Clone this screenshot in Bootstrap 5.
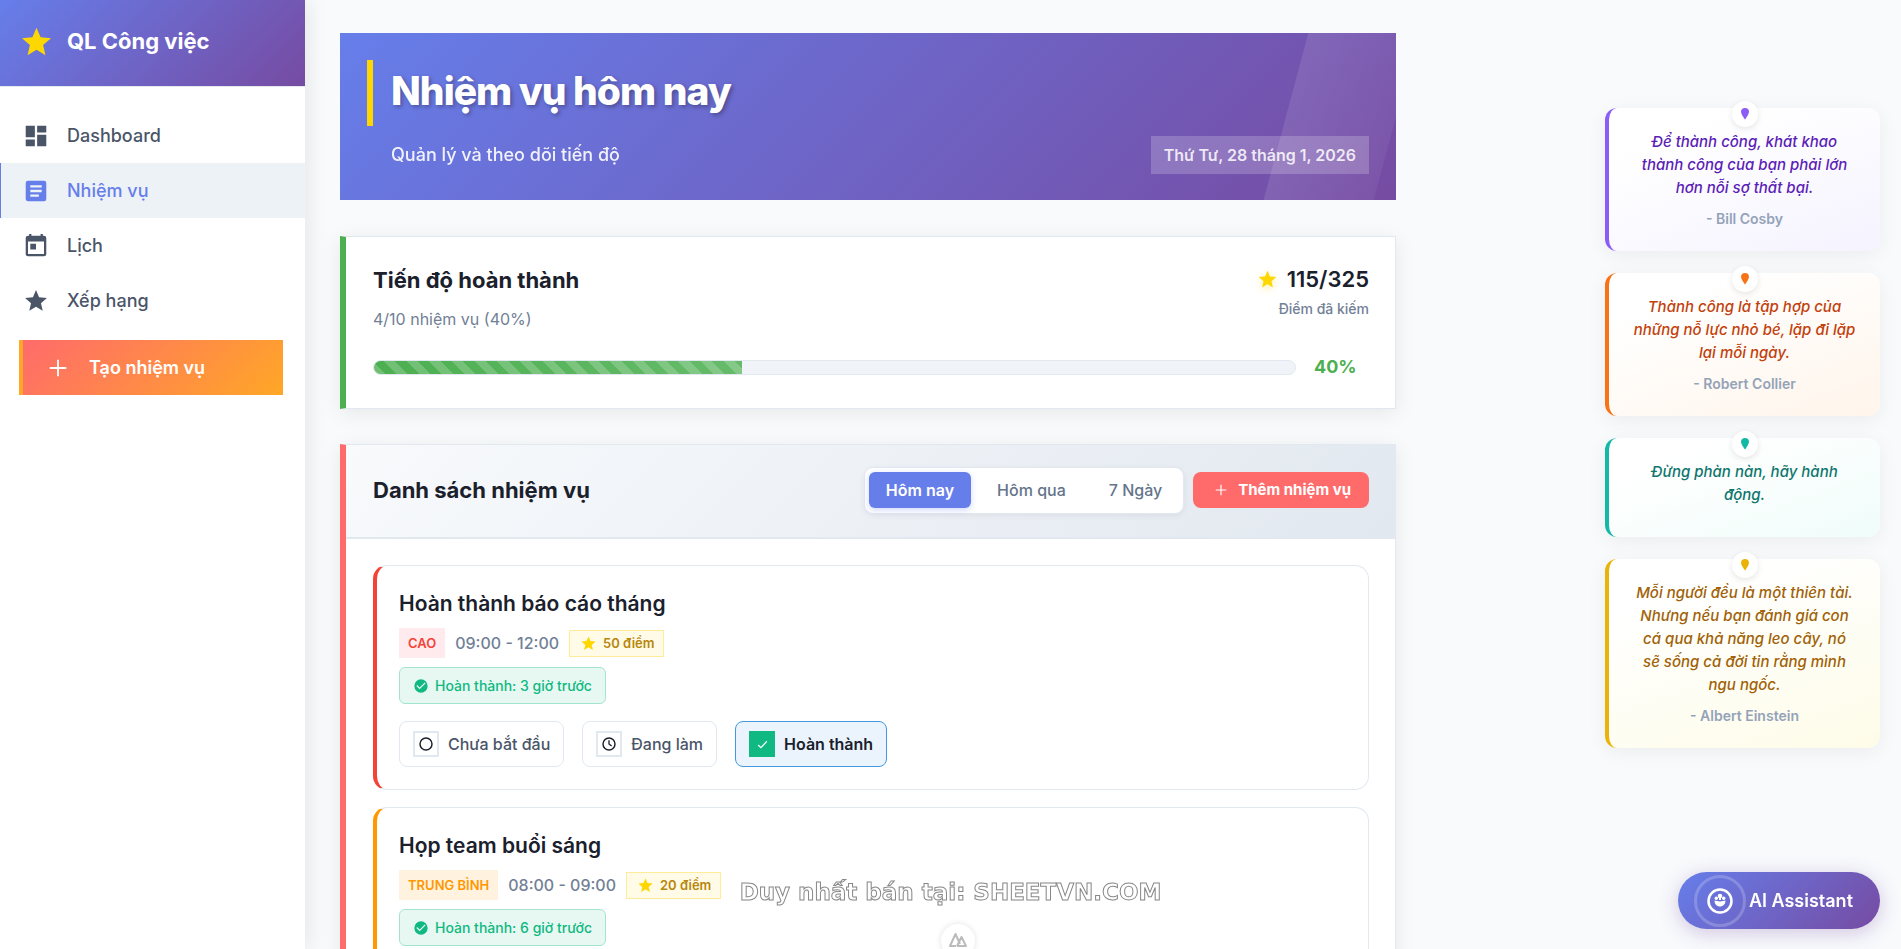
<!DOCTYPE html>
<html lang="vi">
<head>
<meta charset="utf-8">
<meta name="viewport" content="width=device-width, initial-scale=1">
<title>QL Công việc</title>
<link href="https://cdn.jsdelivr.net/npm/bootstrap@5.3.0/dist/css/bootstrap.min.css" rel="stylesheet">
<style>
  body { font-family: Inter, "Noto Sans", sans-serif; background: #f8fafc; color: #1a202c; font-size: 16px; line-height: 24px; }
  svg { display: block; flex: none; }
  .gold { color: #ffd700; }

  /* Sidebar */
  .side { width: 305px; background: #fff; box-shadow: 4px 0 20px rgba(0,0,0,.08); z-index: 2; }
  .brand { height: 87px; padding: 0 22px 4px; gap: 16px; background: linear-gradient(135deg, #667eea, #764ba2); border-bottom: 1px solid #e2e8f0; color: #fff; font-size: 22px; font-weight: 700; }
  .side-nav { padding-top: 21px; }
  .side-link { height: 55px; padding-left: 23px; gap: 19px; color: #4a5568; font-size: 18px; font-weight: 500; text-decoration: none; border-left: 1px solid transparent; }
  .side-link.active { color: #667eea; background: #edf2f7; border-left-color: #667eea; }
  .btn-create { height: 55px; margin: 12px 22px 0 19px; padding: 0 0 0 24px; gap: 20px; border: 0; border-left: 4px solid #ffa726; background: linear-gradient(135deg, #ff6b6b, #ffa726); color: #fff; font-size: 18px; font-weight: 600; }

  /* Page */
  .page { height: 100vh; overflow-y: auto; scrollbar-width: none; }
  .page::-webkit-scrollbar { display: none; }
  .content { padding: 33px 0 33px 35px; gap: 35px; min-width: 0; }
  .hero { height: 167px; margin-bottom: 1px; padding: 27px; background: linear-gradient(135deg, #667eea, #764ba2); color: #fff; overflow: hidden; position: relative; }
  .hero::after { content: ""; position: absolute; top: 0; right: 0; width: 110px; height: 100%; background: linear-gradient(90deg, rgba(255,255,255,.1), rgba(255,255,255,.05)); transform: skewX(-15deg); }
  .hero h1 { height: 66px; margin: 0 0 10px; padding-left: 18px; border-left: 6px solid #ffd700; font-size: 39px; font-weight: 800; line-height: 62px; letter-spacing: -1px; text-shadow: 2px 2px 4px rgba(0,0,0,.3); }
  .hero-sub { padding-left: 24px; font-size: 18px; font-weight: 500; opacity: .9; }
  .hero-date { height: 38px; padding: 0 13px; background: rgba(255,255,255,.2); color: rgba(255,255,255,.85); font-size: 16px; font-weight: 600; line-height: 38px; }

  .panel { background: #fff; border: 1px solid #e2e8f0; border-left-width: 6px; box-shadow: 0 4px 20px rgba(0,0,0,.08); }
  .panel-green { height: 173px; padding: 26px 26px 26px 27px; border-left-color: #4caf50; }
  .panel-red { border-left-color: #ff6b6b; }
  .panel h2 { margin: 0; font-size: 22px; font-weight: 700; line-height: 34px; }
  .muted { color: #718096; }
  .panel-note { margin-top: 10px; }
  .earned { font-size: 22px; font-weight: 600; line-height: 32px; gap: 9px; }
  .earned-label { font-size: 14px; font-weight: 500; line-height: 27px; }
  .star-glow { filter: drop-shadow(0 2px 4px rgba(255,215,0,.4)); }
  .meter-row { margin-top: 24px; gap: 18px; }
  .meter { height: 15px; background: #f0f4f8; border: 1px solid #e2e8f0; border-radius: 8px; }
  .meter .progress-bar { background: repeating-linear-gradient(45deg, rgba(255,255,255,.2) 0 8px, transparent 8px 16px), linear-gradient(90deg, #4caf50, #66bb6a); }
  .meter-value { width: 55px; color: #4caf50; font-size: 18px; font-weight: 700; }

  .panel-head { height: 94px; padding: 0 26px 2px 27px; background: linear-gradient(135deg, #f8fafc, #e2e8f0); border-bottom: 2px solid #e2e8f0; }
  .tools { gap: 9px; }
  .tabs { height: 47px; padding: 0 4px; gap: 9px; background: #fff; border: 1px solid #e2e8f0; border-radius: 9px; box-shadow: 0 2px 6px rgba(0,0,0,.06); }
  .tabs button { height: 36px; padding: 0 17px; border: 0; border-radius: 6px; color: #64748b; background: none; font-size: 16px; font-weight: 500; }
  .tabs button.active { background: #667eea; color: #fff; font-weight: 600; box-shadow: 0 2px 6px rgba(102,126,234,.3); }
  .btn-add { height: 36px; padding: 0 18px 0 21px; gap: 10px; border: 0; border-radius: 8px; background: #ff6b6b; color: #fff; font-size: 15px; font-weight: 700; }

  /* Task cards */
  .task-list { padding: 26px 26px 26px 27px; gap: 17px; }
  .task { padding: 22px; border: 1px solid #e2e8f0; border-left: 4px solid #f44336; border-radius: 14px; }
  .task-mid { border-left-color: #ff9800; }
  .task h3 { margin: 0 0 9px; font-size: 21px; font-weight: 600; line-height: 31px; }
  .meta { gap: 10px; margin-bottom: 9px; height: 30px; }
  .prio { height: 30px; padding: 0 9px; background: #ffebee; color: #f44336; font-size: 13px; font-weight: 600; line-height: 30px; }
  .prio-mid { background: #fff3e0; color: #ff9800; }
  .task-time { font-weight: 500; }
  .pts { height: 27px; padding: 0 9px 0 10px; gap: 6px; background: #fffbe6; border: 1px solid #ffec99; color: #b8860b; font-size: 13px; font-weight: 600; }
  .done { height: 37px; padding: 0 13px; gap: 6px; background: #e7f8f2; border: 1px solid #a3e4cf; border-radius: 6px; color: #10b981; font-size: 14px; font-weight: 500; }
  .states { gap: 18px; margin-top: 17px; }
  .state { height: 46px; padding: 0 13px; gap: 9px; background: #fff; border: 1px solid #e2e8f0; border-radius: 8px; color: #4a5568; font-size: 16px; font-weight: 500; }
  .state.active { background: #ebf4fd; border-color: #4299e1; color: #1a202c; font-weight: 600; }
  .state-box { width: 26px; height: 26px; border: 2px solid #e2e8f0; color: #1a202c; background: #fff; }
  .state.active .state-box { background: #10b981; border-color: #10b981; color: #fff; }

  /* Quotes */
  .quotes { width: 505px; padding: 108px 21px 0 0; gap: 22px; }
  .quote { --tone: #8b5cf6; width: 275px; padding: 22px; border-left: 4px solid var(--tone); border-radius: 12px; box-shadow: 0 4px 20px rgba(0,0,0,.06); position: relative; text-align: center; }
  .quote p { margin: 0 0 9px; font-size: 15px; font-style: italic; font-weight: 500; line-height: 23px; }
  .quote cite { display: block; color: #94a3b8; font-size: 14px; font-style: normal; font-weight: 600; line-height: 21px; }
  .quote .pin { position: absolute; top: -7px; left: 50%; width: 26px; height: 26px; margin-left: -13px; border-radius: 50%; background: #fff; color: var(--tone); box-shadow: 0 2px 6px rgba(0,0,0,.1); }
  .q-violet { background: linear-gradient(160deg, #fff 20%, #f5f3ff); color: #5b21b6; }
  .q-orange { --tone: #f97316; background: linear-gradient(160deg, #fff 20%, #fff5eb); color: #c2410c; }
  .q-teal { --tone: #14b8a6; background: linear-gradient(160deg, #fff 20%, #f0fdfa); color: #0f766e; }
  .q-gold { --tone: #eab308; background: linear-gradient(160deg, #fff 20%, #fefce8); color: #a16207; }

  /* Overlays */
  .assistant { position: fixed; right: 21px; bottom: 20px; height: 57px; padding: 0 27px 0 16px; gap: 3px; border: 0; border-radius: 29px; background: linear-gradient(135deg, #667eea, #764ba2); box-shadow: 0 4px 20px rgba(118,75,162,.3); color: #fff; font-size: 18px; font-weight: 600; z-index: 3; }
  .ring { width: 52px; height: 52px; border: 3px solid rgba(255,255,255,.2); border-radius: 50%; }
  .notice { position: fixed; left: 0; right: 0; bottom: 39px; z-index: 3; text-align: center; font: bold 23px/36px "DejaVu Sans", sans-serif; color: #fff; -webkit-text-stroke: 1px #888; pointer-events: none; }
  .dock { position: fixed; left: 50%; bottom: -9px; width: 34px; height: 34px; margin-left: -10px; border: 0; border-radius: 50%; background: #fff; box-shadow: 0 0 6px rgba(0,0,0,.12); color: #bbb; z-index: 3; }
</style>
</head>
<body>
<svg class="d-none" aria-hidden="true">
  <symbol id="star" viewBox="0 0 24 24"><path fill="currentColor" d="M12 17.27 18.18 21l-1.64-7.03L22 9.24l-7.19-.61L12 2 9.19 8.63 2 9.24l5.46 4.73L5.82 21z"/></symbol>
  <symbol id="plus" viewBox="0 0 24 24"><path fill="currentColor" d="M11 3h2v8h8v2h-8v8h-2v-8H3v-2h8z"/></symbol>
  <symbol id="check-circle" viewBox="0 0 24 24"><path fill="currentColor" d="M12 2a10 10 0 1 0 0 20 10 10 0 0 0 0-20zm-2 15-5-5 1.4-1.4 3.6 3.6 7.6-7.6L19 8z"/></symbol>
  <symbol id="circle" viewBox="0 0 24 24"><circle cx="12" cy="12" r="9" fill="none" stroke="currentColor" stroke-width="2.2"/></symbol>
  <symbol id="clock" viewBox="0 0 24 24"><circle cx="12" cy="12" r="9" fill="none" stroke="currentColor" stroke-width="2.2"/><path d="M12 6.500V12l4 3" fill="none" stroke="currentColor" stroke-width="2"/></symbol>
  <symbol id="check" viewBox="0 0 24 24"><path d="m4 13 5 5L20 6" fill="none" stroke="currentColor" stroke-width="2.200"/></symbol>
  <symbol id="drop" viewBox="0 0 10 14"><path fill="currentColor" d="M5 1C2.500 1 1 2.700 1 4.800 1 7.500 5 12.500 5 12.500S9 7.500 9 4.800C9 2.700 7.500 1 5 1z"/></symbol>
</svg>

<div class="d-flex vh-100">
  <aside class="side flex-shrink-0 vh-100 position-relative">
    <div class="brand d-flex align-items-center">
      <svg class="gold" width="29" height="29" viewBox="2 1.500 20 20"><use href="#star" width="24" height="24"/></svg>
      <span>QL Công việc</span>
    </div>
    <nav class="side-nav d-flex flex-column">
      <a href="#" class="side-link d-flex align-items-center"><svg width="24" height="24" viewBox="1.500 1.500 21 21"><path fill="currentColor" d="M3 13h8V3H3zm0 8h8v-6H3zm10 0h8V11h-8zm0-18v6h8V3z"/></svg>Dashboard</a>
      <a href="#" class="side-link active d-flex align-items-center" aria-current="page"><svg width="24" height="24" viewBox="1.500 1.500 21 21"><path fill="currentColor" d="M19 3H5a2 2 0 0 0-2 2v14c0 1.100.9 2 2 2h14a2 2 0 0 0 2-2V5a2 2 0 0 0-2-2zm-4.500 14H7v-2h7.500zm2.500-4H7v-2h10zm0-4H7V7h10z"/></svg>Nhiệm vụ</a>
      <a href="#" class="side-link d-flex align-items-center"><svg width="24" height="24" viewBox="1.500 1.500 21 21"><path fill="currentColor" d="M19 3h-1V1h-2v2H8V1H6v2H5a2 2 0 0 0-2 2v14a2 2 0 0 0 2 2h14a2 2 0 0 0 2-2V5a2 2 0 0 0-2-2zm0 16H5V8h14zM7 10h5v5H7z"/></svg>Lịch</a>
      <a href="#" class="side-link d-flex align-items-center"><svg width="24" height="24" viewBox="1 1 22 22"><use href="#star" width="24" height="24"/></svg>Xếp hạng</a>
      <button type="button" class="btn-create d-flex align-items-center"><svg width="22" height="22"><use href="#plus"/></svg>Tạo nhiệm vụ</button>
    </nav>
  </aside>

  <div class="page flex-grow-1 d-flex">
    <main class="content flex-grow-1 d-flex flex-column">
      <header class="hero flex-shrink-0">
        <h1>Nhiệm vụ hôm nay</h1>
        <div class="d-flex justify-content-between align-items-center">
          <span class="hero-sub">Quản lý và theo dõi tiến độ</span>
          <span class="hero-date">Thứ Tư, 28 tháng 1, 2026</span>
        </div>
      </header>

      <section class="panel panel-green flex-shrink-0">
        <div class="d-flex justify-content-between">
          <div>
            <h2>Tiến độ hoàn thành</h2>
            <div class="panel-note muted">4/10 nhiệm vụ (40%)</div>
          </div>
          <div class="text-end">
            <div class="earned d-flex align-items-center justify-content-end"><svg class="gold star-glow" width="21" height="21"><use href="#star"/></svg>115/325</div>
            <div class="earned-label muted">Điểm đã kiếm</div>
          </div>
        </div>
        <div class="meter-row d-flex align-items-center">
          <div class="meter progress flex-grow-1" role="progressbar" aria-label="Tiến độ" aria-valuenow="40" aria-valuemin="0" aria-valuemax="100"><div class="progress-bar" style="width:40%"></div></div>
          <span class="meter-value">40%</span>
        </div>
      </section>

      <section class="panel panel-red flex-shrink-0">
        <div class="panel-head d-flex align-items-center justify-content-between">
          <h2>Danh sách nhiệm vụ</h2>
          <div class="tools d-flex align-items-center">
            <div class="tabs d-flex align-items-center">
              <button type="button" class="active">Hôm nay</button>
              <button type="button">Hôm qua</button>
              <button type="button">7 Ngày</button>
            </div>
            <button type="button" class="btn-add d-flex align-items-center"><svg width="14" height="14"><use href="#plus"/></svg>Thêm nhiệm vụ</button>
          </div>
        </div>
        <div class="task-list d-flex flex-column">
          <article class="task">
            <h3>Hoàn thành báo cáo tháng</h3>
            <div class="meta d-flex align-items-center">
              <span class="prio">CAO</span>
              <span class="task-time muted">09:00 - 12:00</span>
              <span class="pts d-flex align-items-center"><svg class="gold" width="17" height="17"><use href="#star"/></svg>50 điểm</span>
            </div>
            <div class="d-flex"><span class="done d-flex align-items-center"><svg width="16" height="16"><use href="#check-circle"/></svg>Hoàn thành: 3 giờ trước</span></div>
            <div class="states d-flex">
              <button type="button" class="state d-flex align-items-center"><span class="state-box d-flex align-items-center justify-content-center"><svg width="16" height="16"><use href="#circle"/></svg></span>Chưa bắt đầu</button>
              <button type="button" class="state d-flex align-items-center"><span class="state-box d-flex align-items-center justify-content-center"><svg width="16" height="16"><use href="#clock"/></svg></span>Đang làm</button>
              <button type="button" class="state active d-flex align-items-center"><span class="state-box d-flex align-items-center justify-content-center"><svg width="13" height="13"><use href="#check"/></svg></span>Hoàn thành</button>
            </div>
          </article>
          <article class="task task-mid">
            <h3>Họp team buổi sáng</h3>
            <div class="meta d-flex align-items-center">
              <span class="prio prio-mid">TRUNG BÌNH</span>
              <span class="task-time muted">08:00 - 09:00</span>
              <span class="pts d-flex align-items-center"><svg class="gold" width="17" height="17"><use href="#star"/></svg>20 điểm</span>
            </div>
            <div class="d-flex"><span class="done d-flex align-items-center"><svg width="16" height="16"><use href="#check-circle"/></svg>Hoàn thành: 6 giờ trước</span></div>
          </article>
        </div>
      </section>
    </main>

    <aside class="quotes flex-shrink-0 d-flex flex-column align-items-end">
      <blockquote class="quote q-violet m-0"><span class="pin d-flex align-items-center justify-content-center"><svg width="10" height="14"><use href="#drop"/></svg></span><p>Để thành công, khát khao thành&nbsp;công của bạn phải lớn hơn nỗi sợ thất bại.</p><cite>- Bill Cosby</cite></blockquote>
      <blockquote class="quote q-orange m-0"><span class="pin d-flex align-items-center justify-content-center"><svg width="10" height="14"><use href="#drop"/></svg></span><p>Thành công là tập hợp của những nỗ lực nhỏ bé, lặp đi lặp lại mỗi ngày.</p><cite>- Robert Collier</cite></blockquote>
      <blockquote class="quote q-teal m-0"><span class="pin d-flex align-items-center justify-content-center"><svg width="10" height="14"><use href="#drop"/></svg></span><p>Đừng phàn nàn, hãy hành động.</p></blockquote>
      <blockquote class="quote q-gold m-0"><span class="pin d-flex align-items-center justify-content-center"><svg width="10" height="14"><use href="#drop"/></svg></span><p>Mỗi người đều là một thiên tài. Nhưng nếu bạn đánh giá con cá&nbsp;qua khả năng leo cây, nó sẽ&nbsp;sống cả đời tin rằng mình ngu&nbsp;ngốc.</p><cite>- Albert Einstein</cite></blockquote>
    </aside>
  </div>
</div>

<div class="notice">Duy nhất bán tại: SHEETVN.COM</div>
<button type="button" class="dock d-flex justify-content-center p-0 pt-2" aria-label="Menu"><svg width="20" height="16" viewBox="0 0 20 16" fill="none" stroke="currentColor" stroke-width="2" stroke-linejoin="round"><path d="M8 14H2L7.500 2 12 12M9 14h9L13.500 5 9 14"/></svg></button>
<button type="button" class="assistant d-flex align-items-center"><span class="ring d-flex align-items-center justify-content-center"><svg width="28" height="28" viewBox="0 0 28 28"><circle cx="14" cy="14" r="11.500" fill="none" stroke="currentColor" stroke-width="2.500"/><g fill="currentColor"><circle cx="14" cy="9" r="2.300"/><circle cx="10.300" cy="11.300" r="1.700"/><circle cx="17.700" cy="11.300" r="1.700"/><path d="M8.500 13.500c2 0 3.500 1 5.500 1s3.500-1 5.500-1c0 3.500-2.300 6-5.500 6s-5.500-2.500-5.500-6z"/><path d="M13 10h2v3h-2z"/></g></svg></span>AI Assistant</button>
<script src="https://cdn.jsdelivr.net/npm/bootstrap@5.3.0/dist/js/bootstrap.bundle.min.js"></script>
</body>
</html>
